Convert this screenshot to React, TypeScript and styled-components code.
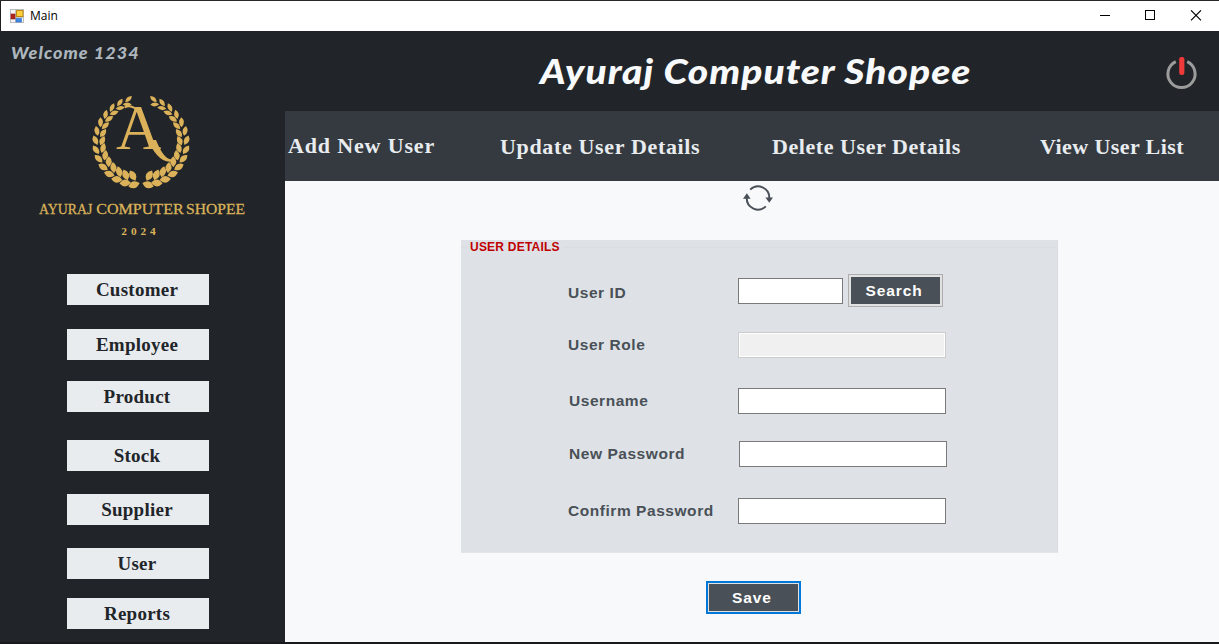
import React from "react";
import styled, { createGlobalStyle } from "styled-components";

const Global = createGlobalStyle`
  * { box-sizing: border-box; }
  body { margin: 0; background: #1a1a1c; }
  button, input { margin: 0; padding: 0; border-radius: 0; outline: 0; }
`;

const Window = styled.div`
  width: 1219px;
  height: 644px;
  overflow: hidden;
  display: flex;
  flex-direction: column;
  border-top: 1px solid #2a2527;
  border-bottom: 2px solid #17191b;
  background: #212529;
`;

const TitleBar = styled.div`
  height: 30px;
  flex: none;
  display: flex;
  align-items: center;
  background: #fff;
  border-left: 1px solid #1f1f22;
  padding: 0 17px 0 9px;
`;

const Caption = styled.span`
  font: 12px "Open Sans", "Noto Sans", sans-serif;
  line-height: 16px;
  color: #000;
  margin-left: 5px;
  flex: 1;
`;

const WindowControls = styled.div`
  display: flex;
  gap: 34px;
`;

const Body = styled.div`
  display: flex;
  flex: 1;
  min-height: 0;
`;

const Sidebar = styled.aside`
  width: 285px;
  flex: none;
  display: flex;
  flex-direction: column;
  background: #212529;
`;

const Welcome = styled.div`
  font: italic 900 16px Lato, sans-serif;
  line-height: 20px;
  letter-spacing: 0.95px;
  white-space: nowrap;
  color: #adb5bd;
  margin: 12px 0 0 11px;
  height: 42px;
  transform: scaleX(1.125);
  transform-origin: left;
`;

const LogoSvg = styled.svg`
  display: block;
  margin-left: 30px;
  flex: none;
`;

const Menu = styled.nav`
  padding: 24px 0 0 67px;
  display: flex;
  flex-direction: column;
`;

const MenuButton = styled.button<{ $gap: number }>`
  width: 142px;
  height: 31px;
  margin-bottom: ${(p) => p.$gap}px;
  border: 0;
  background: #e9ecef;
  color: #212529;
  font: bold 19px "Liberation Serif", serif;
  letter-spacing: 0.25px;
  line-height: 31px;
  padding: 0 2px 0 0;
`;

const Main = styled.main`
  flex: 1;
  display: flex;
  flex-direction: column;
  background: #f8f9fa;
`;

const Header = styled.header`
  height: 80px;
  flex: none;
  display: flex;
  align-items: center;
  background: #212529;
  padding: 0 21px 0 255px;
`;

const Heading = styled.h1`
  margin: 0;
  padding-bottom: 3px;
  flex: 1;
  font: italic 900 35px Lato, sans-serif;
  line-height: 44px;
  letter-spacing: 0.9px;
  white-space: nowrap;
  color: #f8f9fa;
  transform: scaleX(1.113);
  transform-origin: left;
`;

const Power = styled.svg`
  margin-top: 3px;
`;

const Tabs = styled.nav`
  height: 70px;
  flex: none;
  display: grid;
  grid-template-columns: 212px 272px 268px 1fr;
  padding: 21px 0 0 3px;
  background: #343a40;
`;

const Tab = styled.a<{ $raised?: boolean; $tracking: number }>`
  font: bold 22px "Liberation Serif", serif;
  line-height: 30px;
  letter-spacing: ${(p) => p.$tracking}px;
  white-space: nowrap;
  color: #e9ecef;
  margin-top: ${(p) => (p.$raised ? -1 : 0)}px;
`;

const RefreshRow = styled.div`
  height: 59px;
  padding: 3px 0 0 458px;
`;

const Panel = styled.section`
  width: 597px;
  height: 313px;
  margin-left: 176px;
  background: #dee2e6;
  display: flex;
  flex-direction: column;
  border-right: 1px solid #dadcdf;
  border-bottom: 1px solid #e3e5e7;
`;

const LegendLine = styled.div`
  display: flex;
  align-items: center;
  height: 14px;
  gap: 3px;
  &::before {
    content: "";
    width: 6px;
    height: 1px;
    background: #dadcdf;
  }
  &::after {
    content: "";
    flex: 1;
    height: 1px;
    background: #dadcdf;
  }
`;

const Legend = styled.span`
  width: 91px;
  white-space: nowrap;
  font: bold 12px "Liberation Sans", sans-serif;
  line-height: 14px;
  letter-spacing: 0.22px;
  color: #c00000;
`;

const Row = styled.div<{ $top: number }>`
  display: flex;
  align-items: center;
  height: 26px;
  margin: ${(p) => p.$top}px 0 0 107px;
`;

const Label = styled.label<{ $drop?: number; $width?: number; $indent?: number }>`
  width: ${(p) => p.$width ?? 170}px;
  padding-left: ${(p) => p.$indent ?? 0}px;
  padding-top: ${(p) => p.$drop ?? 0}px;
  font: bold 15.5px "Liberation Sans", sans-serif;
  line-height: 18px;
  letter-spacing: 0.55px;
  white-space: nowrap;
  color: #495057;
  flex: none;
`;

const Field = styled.input<{ $width?: number }>`
  width: ${(p) => p.$width ?? 208}px;
  height: 26px;
  border: 1px solid #7a7a7a;
  background: #fff;
  &:disabled {
    border-color: #cccccc;
    background: #f0f0f0;
    box-shadow: inset 0 0 0 1px #fff;
  }
`;

const ActionButton = styled.button<{ $focused?: boolean }>`
  width: 95px;
  height: 33px;
  flex: none;
  border: ${(p) => (p.$focused ? "2px solid #0078d7" : "1px solid #adadad")};
  box-shadow: inset 0 0 0 ${(p) => (p.$focused ? 1 : 2)}px #e1e1e1;
  background: #495057;
  color: #fff;
  font: bold 15.5px "Liberation Sans", sans-serif;
  letter-spacing: 0.9px;
  padding-right: 3px;
`;

const SearchSlot = styled.div`
  display: flex;
  margin-left: 5px;
  padding-bottom: 1px;
`;

const SaveRow = styled.div`
  padding: 28px 0 0 421px;
`;

const gold = "#dbb25a";

function Laurel() {
  const count = 14;
  const leaves: React.ReactElement[] = [];
  for (let i = 0; i < count; i++) {
    const t = i / (count - 1);
    const length = 35 - 8 * t;
    const width = 21 - 9 * t;
    const lens = `M${-length / 2} 0Q0 ${-width} ${length / 2} 0Q0 ${width} ${-length / 2} 0Z`;
    const rings = [
      { angle: 9.4 + 154.6 * t, radius: 129 + 8 * Math.sin(Math.PI * Math.min(t, 0.7)), lean: -26 },
      { angle: 14 + 146 * t, radius: 103 + 18 * Math.sqrt(t), lean: 48 - 26 * Math.min(1, t * 2) },
    ];
    rings.forEach((ring, k) => {
      const a = (ring.angle * Math.PI) / 180;
      const x = -Math.sin(a) * ring.radius;
      const y = Math.cos(a) * ring.radius;
      leaves.push(
        <path key={`${i}-${k}`} d={lens} transform={`translate(${x} ${y}) rotate(${180 + ring.angle + ring.lean})`} />
      );
    });
  }
  return (
    <g fill={gold}>
      <g transform="translate(333 172)">{leaves}</g>
      <g transform="translate(333 172) scale(-1 1)">{leaves}</g>
    </g>
  );
}

function Logo() {
  return (
    <LogoSvg width="225" height="165" viewBox="0 0 675 495">
      <Laurel />
      <text x="258" y="192" fontSize="188" fontFamily="Liberation Serif, serif" fill={gold}>A</text>
      <path d="M284 67Q308 56 328 84" fill="none" stroke={gold} strokeWidth="6" />
      <path d="M352 165H378C390 194 406 226 428 223V229C396 236 372 204 352 165Z" fill={gold} />
      <text y="387" fontFamily="Liberation Serif, serif" fill={gold} stroke={gold} strokeWidth="0.8" fontSize="43">
        <tspan x="27" textLength="160" lengthAdjust="spacingAndGlyphs">AYURAJ</tspan>
        <tspan x="199" textLength="262" lengthAdjust="spacingAndGlyphs">COMPUTER</tspan>
        <tspan x="468" textLength="177" lengthAdjust="spacingAndGlyphs">SHOPEE</tspan>
      </text>
      <text x="274" y="450" textLength="103" fontFamily="Liberation Serif, serif" fontWeight="bold" fontSize="34" fill={gold}>2024</text>
    </LogoSvg>
  );
}

function AppIcon() {
  return (
    <svg width="15" height="15" viewBox="0 0 15 15">
      <rect x="0.5" y="0.5" width="13" height="13" fill="#f4f4f4" stroke="#bdbdbd" />
      <path d="M5.5 1V13M1 8.500H13" stroke="#c4c4c4" />
      <rect x="1" y="5" width="4" height="5" fill="#b3261e" stroke="#8c1a14" strokeWidth="0.6" />
      <rect x="6.500" y="1.500" width="6.500" height="6" fill="#fccf3e" stroke="#c08a12" />
      <rect x="6" y="9.500" width="5.500" height="3.500" fill="#3f86e8" stroke="#2f6cc4" strokeWidth="0.6" />
    </svg>
  );
}

const menuItems: [string, number][] = [
  ["Customer", 24],
  ["Employee", 21],
  ["Product", 28],
  ["Stock", 23],
  ["Supplier", 23],
  ["User", 19],
  ["Reports", 0],
];

export default function App() {
  return (
    <Window>
      <Global />
      <TitleBar>
        <AppIcon />
        <Caption>Main</Caption>
        <WindowControls>
          <svg width="12" height="12" shapeRendering="crispEdges"><path d="M2 5.500H12" stroke="#000" /></svg>
          <svg width="12" height="12" shapeRendering="crispEdges"><rect x="1.500" y="0.5" width="9" height="9" fill="none" stroke="#000" /></svg>
          <svg width="12" height="12"><path d="M1 0.300L11 10.300M11 0.300L1 10.300" stroke="#000" strokeWidth="1.100" /></svg>
        </WindowControls>
      </TitleBar>
      <Body>
        <Sidebar>
          <Welcome>Welcome 1234</Welcome>
          <Logo />
          <Menu>
            {menuItems.map(([name, gap]) => (
              <MenuButton key={name} $gap={gap}>{name}</MenuButton>
            ))}
          </Menu>
        </Sidebar>
        <Main>
          <Header>
            <Heading>Ayuraj Computer Shopee</Heading>
            <Power width="33" height="34" viewBox="0 0 33 34">
              <path d="M10.800 5.600A13.600 13.600 0 1 0 22.200 5.600" fill="none" stroke="#9c9c9c" strokeWidth="3" />
              <rect x="14.200" y="1" width="5.200" height="18" rx="2.200" fill="#ee3a39" />
            </Power>
          </Header>
          <Tabs>
            <Tab $raised $tracking={0.85}>Add New User</Tab>
            <Tab $tracking={0.66}>Update User Details</Tab>
            <Tab $tracking={0.57}>Delete User Details</Tab>
            <Tab $tracking={0.42}>View User List</Tab>
          </Tabs>
          <RefreshRow>
            <svg width="30" height="28" viewBox="0 0 30 28">
              <g fill="none" stroke="#495057" strokeWidth="2">
                <path d="M7.200 5.600A11.300 11.300 0 0 1 26.300 14" />
                <path d="M22.800 22.400A11.300 11.300 0 0 1 3.700 14" />
              </g>
              <path d="M22.400 13.400H30L26.300 18.800ZM0 14.800H7.600L3.900 9.200Z" fill="#495057" />
            </svg>
          </RefreshRow>
          <Panel>
            <LegendLine><Legend>USER DETAILS</Legend></LegendLine>
            <Row $top={24}>
              <Label $drop={3}>User ID</Label>
              <Field $width={105} />
              <SearchSlot><ActionButton>Search</ActionButton></SearchSlot>
            </Row>
            <Row $top={28}><Label>User Role</Label><Field disabled /></Row>
            <Row $top={30}><Label $indent={1}>Username</Label><Field /></Row>
            <Row $top={27}><Label $indent={1} $width={171}>New Password</Label><Field /></Row>
            <Row $top={31}><Label>Confirm Password</Label><Field /></Row>
          </Panel>
          <SaveRow><ActionButton $focused>Save</ActionButton></SaveRow>
        </Main>
      </Body>
    </Window>
  );
}
